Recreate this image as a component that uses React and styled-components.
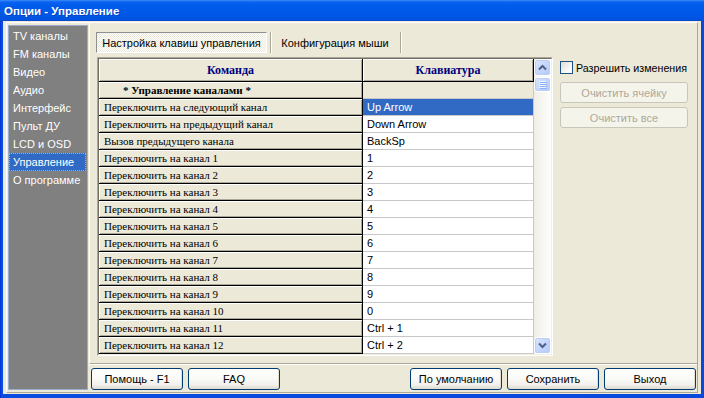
import React from 'react';
import styled, { createGlobalStyle } from 'styled-components';

const Global = createGlobalStyle`
  html, body { margin: 0; padding: 0; background: #ECE9D8; }
  body { font-family: "Liberation Sans", Arial, sans-serif; font-size: 11px; color: #000; }
  * { box-sizing: border-box; }
`;

const Window = styled.div`
  width: 704px;
  height: 398px;
  display: flex;
  flex-direction: column;
  overflow: hidden;
  background: linear-gradient(to right, #0026C9 0, #0A4BE0 1px, #0848DC 100%);
`;

const TitleBar = styled.div`
  height: 21px;
  flex: none;
  display: flex;
  align-items: center;
  padding-left: 4px;
  color: #fff;
  font-weight: bold;
  font-size: 11.5px;
  text-shadow: 1px 1px 0 rgba(10, 24, 131, 0.35);
  background: linear-gradient(to bottom, #3C8CF8 0, #0A62F0 2px, #005BEB 6px, #0058E7 14px, #0054E0 19px, #0A4ACF 21px);
`;

const Body = styled.div`
  flex: 1;
  display: flex;
  margin: 0 3px 4px 3px;
  padding: 1px 3px 1px 3px;
  background: #ECE9D8;
`;

const Panel = styled.div`
  flex: 1;
  display: flex;
  border: 1px solid;
  border-color: #fff #ACA899 #ACA899 #fff;
`;

const Sidebar = styled.ul`
  list-style: none;
  margin: 2px 0 2px 1px;
  padding: 1px 1px 0 0;
  width: 80px;
  background: #808080;
  border: 1px solid #9AAECB;
`;

const NavItem = styled.li`
  height: 18px;
  line-height: 16px;
  padding-left: 3px;
  color: #fff;
  font-size: 11px;
  white-space: nowrap;
  border: 1px ${p => (p.$active ? 'dotted #D9A94A' : 'solid transparent')};
  background: ${p => (p.$active ? '#316AC5' : 'transparent')};
`;

const RightColumn = styled.div`
  flex: 1;
  margin-left: 1px;
  display: flex;
  flex-direction: column;
`;

const MainPanel = styled.div`
  height: 341px;
  flex: none;
  border-left: 1px solid #fff;
  border-bottom: 1px solid #ACA899;
  box-shadow: 0 1px 0 #fff;
  padding: 9px 0 0 6px;
`;

const TabBar = styled.div`
  display: flex;
  height: 21px;
`;

const Tab = styled.div`
  height: 21px;
  display: flex;
  align-items: center;
  justify-content: center;
  font-size: 11px;
  white-space: nowrap;
  width: ${p => p.$w}px;
  border: 1px solid;
  border-color: ${p => (p.$active ? '#8E8F8F #fff #fff #8E8F8F' : 'transparent')};
  background: ${p =>
    p.$active
      ? 'repeating-conic-gradient(#FFFFFF 0% 25%, #ECE9D8 0% 50%) 0 0 / 2px 2px'
      : 'transparent'};
`;

const TabSep = styled.div`
  width: 2px;
  height: 21px;
  margin: 0 1px 0 3px;
  border-left: 1px solid #ACA899;
  border-right: 1px solid #fff;
`;

const ContentRow = styled.div`
  display: flex;
  margin-top: 4px;
`;

const GridFrame = styled.div`
  margin-left: 1px;
  width: 456px;
  height: 299px;
  border: 1px solid;
  border-color: #ACA899 #fff #fff #ACA899;
`;

const GridInner = styled.div`
  width: 100%;
  height: 100%;
  display: flex;
  border: 1px solid;
  border-color: #716F64 #F1EFE2 #F1EFE2 #716F64;
`;

const Table = styled.div`
  width: 435px;
  display: grid;
  grid-template-columns: 264px 171px;
  grid-auto-rows: 17px;
  grid-template-rows: 23px;
  background: #fff;
`;

const HeadCell = styled.div`
  display: flex;
  align-items: center;
  justify-content: center;
  font-family: "Liberation Serif", "Times New Roman", serif;
  font-weight: bold;
  font-size: 12px;
  color: #000080;
  background: #ECE9D8;
  border-right: 1px solid #000;
  border-bottom: 1px solid #000;
  box-shadow: inset 1px 1px 0 #fff, inset -1px -1px 0 #ACA899;
`;

const CmdCell = styled.div`
  display: flex;
  align-items: center;
  padding-left: ${p => (p.$category ? 24 : 5)}px;
  font-family: "Liberation Serif", "Times New Roman", serif;
  font-size: 11px;
  font-weight: ${p => (p.$category ? 'bold' : 'normal')};
  white-space: nowrap;
  overflow: hidden;
  background: #ECE9D8;
  border-right: 1px solid #000;
  border-bottom: 1px solid #000;
  box-shadow: inset 1px 1px 0 #fff, inset -1px -1px 0 #ACA899;
`;

const KeyCell = styled.div`
  display: flex;
  align-items: center;
  padding-left: 4px;
  font-size: 11px;
  white-space: nowrap;
  color: ${p => (p.$selected ? '#fff' : '#000')};
  background: ${p => (p.$selected ? '#316AC5' : p.$category ? '#ECE9D8' : '#fff')};
  border-right: 1px solid #C8C8C8;
  border-bottom: 1px solid #C8C8C8;
`;

const ScrollBar = styled.div`
  width: 17px;
  display: flex;
  flex-direction: column;
  background: linear-gradient(to right, #EFEDE6 0, #F6F5F0 40%, #FDFDFA 100%);
`;

const ScrollBtn = styled.div`
  width: 17px;
  height: 17px;
  flex: none;
  display: flex;
  align-items: center;
  justify-content: center;
  border: 1px solid #fff;
  border-radius: 3px;
  background: linear-gradient(135deg, #DCE7FD 0%, #C6D6FC 50%, #B3C9F8 100%);
  box-shadow: inset 0 0 0 1px #BACDF7;
`;

const Thumb = styled(ScrollBtn)`
  height: 15px;
  margin-top: 1px;
`;

const Track = styled.div`
  flex: 1;
`;

const Controls = styled.div`
  margin-left: 7px;
  padding-top: 4px;
  display: flex;
  flex-direction: column;
  width: 128px;
`;

const CheckRow = styled.label`
  display: flex;
  align-items: center;
  gap: 3px;
  height: 13px;
  font-size: 10.7px;
  white-space: nowrap;
  margin-bottom: 8px;
`;

const CheckBox = styled.span`
  width: 13px;
  height: 13px;
  flex: none;
  border: 1px solid #1C5180;
  background: linear-gradient(135deg, #DCDCD7 0%, #F6F6F4 60%, #FFFFFF 100%);
`;

const SideButton = styled.div`
  height: 21px;
  margin-bottom: 4px;
  display: flex;
  align-items: center;
  justify-content: center;
  font-size: 11px;
  color: #ACA899;
  background: #F5F4EA;
  border: 1px solid #C9C7BA;
  border-radius: 3px;
`;

const ButtonRow = styled.div`
  margin-top: 4px;
  height: 22px;
  display: flex;
  justify-content: space-between;
  padding: 0 1px 0 2px;
`;

const ButtonGroup = styled.div`
  display: flex;
  gap: 5px;
`;

const Button = styled.div`
  width: 92px;
  height: 22px;
  display: flex;
  align-items: center;
  justify-content: center;
  font-size: 11px;
  color: #000;
  border: 1px solid #003C74;
  border-radius: 3px;
  background: linear-gradient(to bottom, #FFFFFF 0%, #FAFAF8 45%, #F1F0EB 80%, #DCD7CC 100%);
  box-shadow: inset -1px -1px 0 #E3E0D2;
`;

const Chevron = ({ up }) => (
  <svg width="9" height="7" viewBox="0 0 9 7">
    <polyline
      points={up ? '1,5.5 4.5,2 8,5.5' : '1,1.5 4.5,5 8,1.5'}
      fill="none"
      stroke="#4D6185"
      strokeWidth="2"
    />
  </svg>
);

const Grip = () => (
  <svg width="8" height="8" viewBox="0 0 8 8">
    {[0, 2, 4, 6].map(y => (
      <g key={y}>
        <line x1="0" y1={y + 0.5} x2="7" y2={y + 0.5} stroke="#EEF4FE" />
        <line x1="1" y1={y + 1.5} x2="8" y2={y + 1.5} stroke="#8CB0F8" />
      </g>
    ))}
  </svg>
);

const nav = ['TV каналы', 'FM каналы', 'Видео', 'Аудио', 'Интерфейс', 'Пульт ДУ', 'LCD и OSD', 'Управление', 'О программе'];

const rows = [
  { cmd: '* Управление каналами *', key: '', category: true },
  { cmd: 'Переключить на следующий канал', key: 'Up Arrow', selected: true },
  { cmd: 'Переключить на предыдущий канал', key: 'Down Arrow' },
  { cmd: 'Вызов предыдущего канала', key: 'BackSp' },
  ...[1, 2, 3, 4, 5, 6, 7, 8, 9].map(n => ({ cmd: `Переключить на канал ${n}`, key: String(n) })),
  { cmd: 'Переключить на канал 10', key: '0' },
  { cmd: 'Переключить на канал 11', key: 'Ctrl + 1' },
  { cmd: 'Переключить на канал 12', key: 'Ctrl + 2' },
];

export default function App() {
  return (
    <>
      <Global />
      <Window>
        <TitleBar>Опции - Управление</TitleBar>
        <Body>
          <Panel>
            <Sidebar>
              {nav.map(n => (
                <NavItem key={n} $active={n === 'Управление'}>{n}</NavItem>
              ))}
            </Sidebar>
            <RightColumn>
              <MainPanel>
                <TabBar>
                  <Tab $active $w={171}>Настройка клавиш управления</Tab>
                  <TabSep />
                  <Tab $w={124}>Конфигурация мыши</Tab>
                  <TabSep />
                </TabBar>
                <ContentRow>
                  <GridFrame>
                    <GridInner>
                      <Table>
                        <HeadCell>Команда</HeadCell>
                        <HeadCell>Клавиатура</HeadCell>
                        {rows.map((r, i) => (
                          <React.Fragment key={i}>
                            <CmdCell $category={r.category}>{r.cmd}</CmdCell>
                            <KeyCell $category={r.category} $selected={r.selected}>{r.key}</KeyCell>
                          </React.Fragment>
                        ))}
                      </Table>
                      <ScrollBar>
                        <ScrollBtn><Chevron up /></ScrollBtn>
                        <Thumb><Grip /></Thumb>
                        <Track />
                        <ScrollBtn><Chevron /></ScrollBtn>
                      </ScrollBar>
                    </GridInner>
                  </GridFrame>
                  <Controls>
                    <CheckRow>
                      <CheckBox />
                      Разрешить изменения
                    </CheckRow>
                    <SideButton>Очистить ячейку</SideButton>
                    <SideButton>Очистить все</SideButton>
                  </Controls>
                </ContentRow>
              </MainPanel>
              <ButtonRow>
                <ButtonGroup>
                  <Button>Помощь - F1</Button>
                  <Button>FAQ</Button>
                </ButtonGroup>
                <ButtonGroup>
                  <Button>По умолчанию</Button>
                  <Button>Сохранить</Button>
                  <Button>Выход</Button>
                </ButtonGroup>
              </ButtonRow>
            </RightColumn>
          </Panel>
        </Body>
      </Window>
    </>
  );
}
